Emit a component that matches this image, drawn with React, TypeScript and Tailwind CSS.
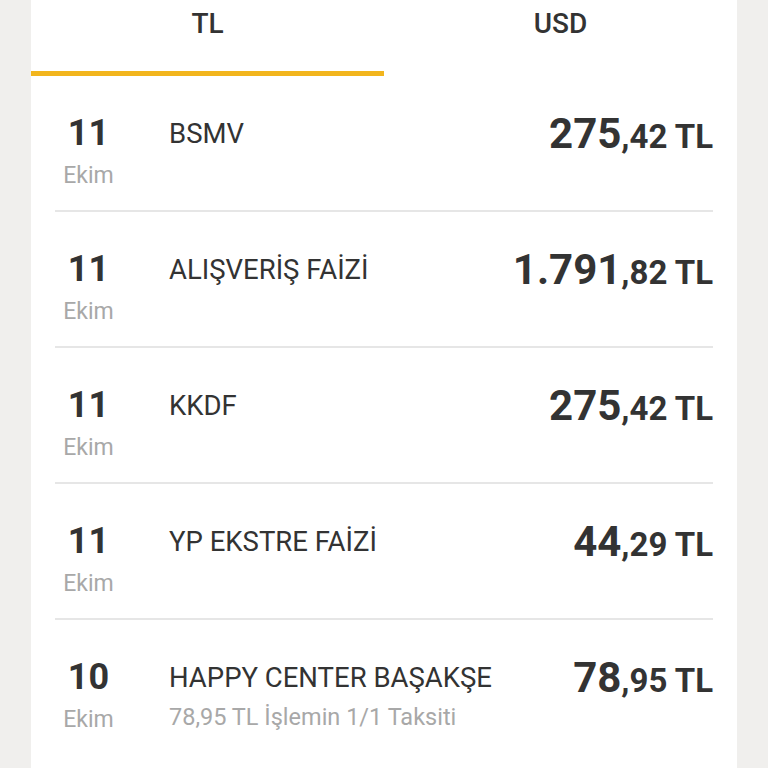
const rows = [
  { day: "11", title: "BSMV", whole: "275", dec: ",42 TL" },
  { day: "11", title: "ALIŞVERİŞ FAİZİ", whole: "1.791", dec: ",82 TL" },
  { day: "11", title: "KKDF", whole: "275", dec: ",42 TL" },
  { day: "11", title: "YP EKSTRE FAİZİ", whole: "44", dec: ",29 TL" },
  {
    day: "10",
    title: "HAPPY CENTER BAŞAKŞE",
    sub: "78,95 TL İşlemin 1/1 Taksiti",
    whole: "78",
    dec: ",95 TL",
  },
];

const App = () => {
  return (
    <div className="h-[768px] overflow-hidden bg-[#f0efed] font-['Roboto','Liberation_Sans',sans-serif] text-[#333333]">
      <div className="mx-[31px] h-full bg-white">
        <div className="flex">
          <div className="flex-1">
            <div className="h-[71px] pt-[10px] text-center text-[28px] leading-none font-medium">TL</div>
            <div className="h-[5px] bg-[#f2b51d]"></div>
          </div>
          <div className="flex-1">
            <div className="h-[71px] pt-[10px] text-center text-[28px] leading-none font-medium">USD</div>
          </div>
        </div>

        <div className="px-[24px]">
          {rows.map((row, i) => (
            <div
              key={i}
              className={
                row.sub
                  ? "flex h-[160px] items-start border-b-2 border-[#e6e6e6] pt-[39px]"
                  : "flex h-[136px] items-start border-b-2 border-[#e6e6e6] pt-[39px]"
              }
            >
              <div className="flex w-[67px] flex-col items-center">
                <span className="text-[36px] leading-none font-bold">{row.day}</span>
                <span className="mt-[13px] text-[23px] leading-none text-[#a8a8a8]">Ekim</span>
              </div>
              <div className="ml-[47px] flex flex-1 flex-col">
                <span className="mt-[3px] text-[27.5px] leading-[32px]">{row.title}</span>
                {row.sub && (
                  <span className="mt-[12px] text-[23.5px] leading-none text-[#a8a8a8]">{row.sub}</span>
                )}
              </div>
              <div className="-mt-[2px] flex items-baseline font-bold">
                <span className="text-[42px] leading-none">{row.whole}</span>
                <span className="text-[33px] leading-none">{row.dec}</span>
              </div>
            </div>
          ))}
        </div>
      </div>
    </div>
  );
};

export default App;
